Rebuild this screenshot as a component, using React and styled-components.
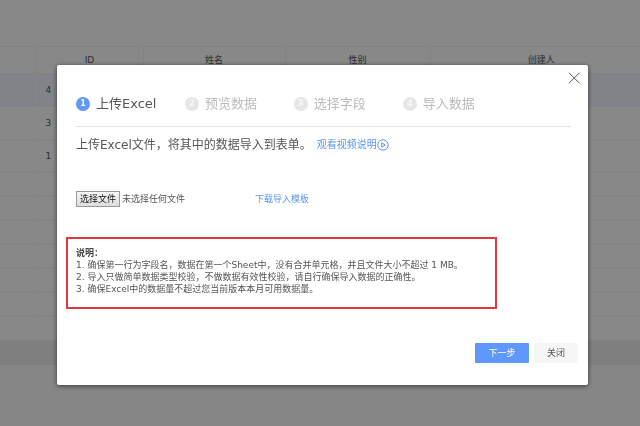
import React, { useState } from "react";
import styled, { createGlobalStyle } from "styled-components";

const GlobalStyle = createGlobalStyle`
  * {
    box-sizing: border-box;
  }

  body {
    margin: 0;
    background: #f8f8f8;
    color: #555;
    font: 9px/12px "DejaVu Sans", "Noto Sans CJK SC", sans-serif;
  }

  button {
    font: inherit;
    cursor: pointer;
  }
`;

const Page = styled.main`
  min-height: 100vh;
  overflow: hidden;
`;

const TopBar = styled.div`
  height: 46px;
  background: #fcfcfc;
`;

const Records = styled.table`
  width: 102%;
  table-layout: fixed;
  border-collapse: collapse;
  background: #fcfcfc;
`;

const HeadCell = styled.th`
  width: ${(props) => props.$width || "auto"};
  height: 27px;
  padding: 0;
  border: 1px solid #f0f0f0;
  border-left-width: 0;
  font-weight: normal;
  color: #555;
`;

const Row = styled.tr`
  height: ${(props) => (props.$filled ? "33px" : "24px")};
  background: ${(props) => (props.$selected ? "#eef3fc" : "transparent")};
`;

const Cell = styled.td`
  padding: 0 0 0 9px;
  border-bottom: 1px solid #f0f0f0;
  border-right: 1px solid #f8f8f8;
  color: #555;
`;

const Pager = styled.div`
  height: 24px;
  background: #eaeaea;
`;

const Overlay = styled.div`
  position: fixed;
  inset: 0;
  padding: 65px 52px 40px 57px;
  background: rgba(0, 0, 0, 0.46);
`;

const Dialog = styled.section`
  padding: 4px 7px 22px 9px;
  border-radius: 2px;
  background: #fff;
  box-shadow: 0 1px 5px rgba(0, 0, 0, 0.6);
`;

const DialogTop = styled.div`
  display: flex;
  justify-content: flex-end;
`;

const CloseIcon = styled.button`
  display: flex;
  padding: 3px 0;
  border: 0;
  background: none;
  color: #555;
`;

const Body = styled.div`
  padding: 0 10px;
`;

const Steps = styled.ol`
  display: flex;
  margin: 0;
  padding: 9px 0 14px;
  border-bottom: 1px solid #e2e2e2;
  list-style: none;
`;

const Step = styled.li`
  display: flex;
  align-items: center;
  gap: 6px;
  width: 22%;
  color: ${(props) => (props.$active ? "#555" : "#bbb")};
  font-size: 13px;
  line-height: 16px;
`;

const StepNumber = styled.span`
  width: 14px;
  height: 14px;
  border-radius: 50%;
  background: ${(props) => (props.$active ? "#5f97fb" : "#e6e6e6")};
  color: ${(props) => (props.$active ? "#fff" : "#f6f6f6")};
  font-size: 8px;
  font-weight: bold;
  line-height: 14px;
  text-align: center;
`;

const Intro = styled.div`
  display: flex;
  align-items: center;
  gap: 5px;
  padding: 10px 0 38px;
`;

const IntroText = styled.p`
  margin: 0;
  font-size: 12px;
  line-height: 16px;
`;

const Link = styled.a`
  display: flex;
  align-items: center;
  color: #5b94ea;
  font-size: ${(props) => (props.$large ? "10px" : "9px")};
  text-decoration: none;
`;

const FileRow = styled.div`
  display: flex;
  align-items: center;
`;

const FileInput = styled.input`
  position: absolute;
  width: 1px;
  height: 1px;
  opacity: 0;
`;

const FileLabel = styled.label`
  display: flex;
  align-items: center;
  gap: 2px;
  width: 179px;
  cursor: pointer;
`;

const FileButton = styled.span`
  width: 44px;
  border: 1px solid #999;
  background: linear-gradient(#f6f6f6, #dedede);
  color: #111;
  line-height: 14px;
  text-align: center;
`;

const Notes = styled.div`
  margin: 30px 84px 0 0;
  padding: 8px 8px 12px;
  border: 2px solid #e0383e;
`;

const NotesTitle = styled.strong`
  display: block;
  color: #444;
`;

const NotesList = styled.ol`
  margin: 0;
  padding: 0;
  list-style: none;
  white-space: nowrap;
`;

const Footer = styled.footer`
  display: flex;
  justify-content: flex-end;
  gap: 5px;
  padding: 34px 3px 0 0;
`;

const FooterButton = styled.button`
  width: ${(props) => (props.$primary ? "54px" : "44px")};
  height: 20px;
  padding: 0;
  border: 0;
  border-radius: 1px;
  background: ${(props) => (props.$primary ? "#5f97fb" : "#f6f6f6")};
  color: ${(props) => (props.$primary ? "#fff" : "#555")};
`;

const columns = [
  { label: "", width: "36px" },
  { label: "ID", width: "107px" },
  { label: "姓名", width: "142px" },
  { label: "性别", width: "145px" },
  { label: "创建人" },
];
const records = ["4", "3", "1"];
const emptyRows = [1, 2, 3, 4, 5, 6, 7];
const steps = ["上传Excel", "预览数据", "选择字段", "导入数据"];
const notes = [
  "1. 确保第一行为字段名，数据在第一个Sheet中，没有合并单元格，并且文件大小不超过 1 MB。",
  "2. 导入只做简单数据类型校验，不做数据有效性校验，请自行确保导入数据的正确性。",
  "3. 确保Excel中的数据量不超过您当前版本本月可用数据量。",
];

/**
 * Cells of one record, only the ID is filled in
 */
const RecordCells = ({ id }) =>
  columns.map((column, index) => (
    <Cell key={index}>{index === 1 ? id : ""}</Cell>
  ));

const RecordTable = () => (
  <Records>
    <thead>
      <tr>
        {columns.map((column, index) => (
          <HeadCell key={index} $width={column.width}>
            {column.label}
          </HeadCell>
        ))}
      </tr>
    </thead>
    <tbody>
      {records.map((id, index) => (
        <Row key={id} $filled $selected={index === 0}>
          <RecordCells id={id} />
        </Row>
      ))}
      {emptyRows.map((row) => (
        <Row key={`empty-${row}`}>
          <RecordCells />
        </Row>
      ))}
    </tbody>
  </Records>
);

const FilePicker = () => {
  const [fileName, setFileName] = useState("");

  return (
    <>
      <FileInput
        id="excel-file"
        type="file"
        accept=".xls,.xlsx"
        onChange={(e) => setFileName(e.target.files[0]?.name || "")}
      />
      <FileLabel htmlFor="excel-file">
        <FileButton>选择文件</FileButton>
        {fileName || "未选择任何文件"}
      </FileLabel>
    </>
  );
};

const ImportDialog = () => (
  <Dialog role="dialog" aria-label="导入数据">
    <DialogTop>
      <CloseIcon aria-label="关闭">
        <svg width="13" height="12" viewBox="0 0 13 12" stroke="currentColor">
          <path d="M1 .8l10.4 10.4M11.4 .8L1 11.2" />
        </svg>
      </CloseIcon>
    </DialogTop>
    <Body>
      <Steps>
        {steps.map((step, index) => (
          <Step key={step} $active={index === 0}>
            <StepNumber $active={index === 0}>{index + 1}</StepNumber>
            {step}
          </Step>
        ))}
      </Steps>
      <Intro>
        <IntroText>上传Excel文件，将其中的数据导入到表单。</IntroText>
        <Link href="#video" $large>
          观看视频说明
          <svg width="12" height="12" viewBox="0 0 12 12" fill="none">
            <circle cx="6" cy="6" r="5.2" stroke="currentColor" />
            <path d="M4.7 3.8v4.4L8.2 6z" stroke="currentColor" />
          </svg>
        </Link>
      </Intro>
      <FileRow>
        <FilePicker />
        <Link href="#template">下载导入模板</Link>
      </FileRow>
    </Body>
    <Notes>
      <NotesTitle>说明：</NotesTitle>
      <NotesList>
        {notes.map((note) => (
          <li key={note}>{note}</li>
        ))}
      </NotesList>
    </Notes>
    <Footer>
      <FooterButton $primary>下一步</FooterButton>
      <FooterButton>关闭</FooterButton>
    </Footer>
  </Dialog>
);

const App = () => (
  <>
    <GlobalStyle />
    <Page>
      <TopBar />
      <RecordTable />
      <Pager />
    </Page>
    <Overlay>
      <ImportDialog />
    </Overlay>
  </>
);

export default App;
